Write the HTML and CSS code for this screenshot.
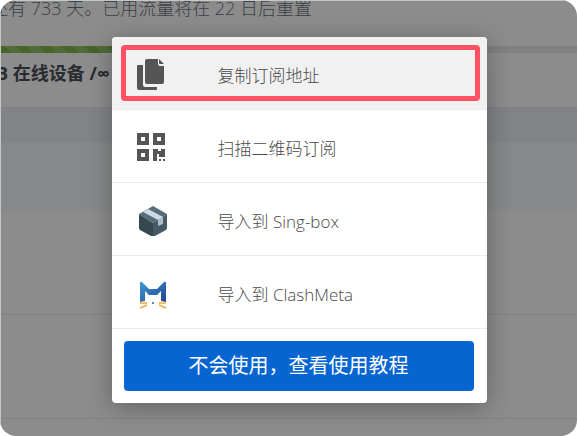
FILE: index.html
```
<!DOCTYPE html>
<html lang="zh-CN">
<head>
    <meta charset="UTF-8">
    <meta name="viewport" content="width=device-width, initial-scale=1.0">
    <title>订阅</title>
    <link rel="stylesheet" href="styles.css">
</head>
<body>
    <div class="app">
        <main class="page">
            <section class="plan">
                <p class="plan-expire">还有 733 天。已用流量将在 22 日后重置</p>
                <div class="progress">
                    <div class="progress-bar"></div>
                </div>
                <p class="plan-usage">B 在线设备 /∞</p>
            </section>
            <div class="band band-head"></div>
            <div class="band band-body"></div>
            <div class="band band-row"></div>
            <div class="band band-row"></div>
        </main>

        <div class="overlay">
            <div class="modal" role="dialog" aria-label="订阅">
                <button type="button" class="item active">
                    <svg class="icon" viewBox="0 0 32 32">
                        <g fill="#555">
                            <path d="M2 7h5v20q0 2 2 2h12v2q0 1-1 1H3q-2 0-2-2V8q0-1 1-1z"/>
                            <path d="M11 1h11v5q0 2 2 2h4v16q0 2-2 2H11q-2 0-2-2V3q0-2 2-2z"/>
                            <path d="M23 1l5 5h-4q-1 0-1-1z"/>
                        </g>
                    </svg>
                    <span>复制订阅地址</span>
                </button>
                <button type="button" class="item">
                    <svg class="icon" viewBox="0 0 32 32">
                        <path fill="none" stroke="#555" stroke-width="4" d="M3 4h8v8H3zM19 4h8v8h-8zM3 20h8v8H3z"/>
                        <path fill="#555" d="M17 18h5v2h3v-2h4v8h-6v-3h-2v7h-4zM23 28h2v2h-2zM27 28h2v2h-2z"/>
                    </svg>
                    <span>扫描二维码订阅</span>
                </button>
                <button type="button" class="item">
                    <svg class="icon" viewBox="0 0 32 32">
                        <path fill="#546e7a" d="M17 2l14 8-14 9-14-9z"/>
                        <path fill="#37474f" d="M3 10l14 9v14L4 26q-1-1-1-2z"/>
                        <path fill="#455a64" d="M31 10l-14 9v14l13-7q1-1 1-2z"/>
                        <path fill="#cfd8e3" d="M12 5l15 8-5 3L7 8z"/>
                        <path fill="#b0bccb" d="M22 16l5-3v7l-5 2z"/>
                    </svg>
                    <span>导入到 Sing-box</span>
                </button>
                <button type="button" class="item">
                    <svg class="icon" viewBox="0 0 32 32">
                        <defs>
                            <linearGradient id="cat" x1="0" y1="0" x2="1" y2="1">
                                <stop offset="0" stop-color="#3f9bd8"/>
                                <stop offset="1" stop-color="#1f438f"/>
                            </linearGradient>
                        </defs>
                        <path fill="url(#cat)" d="M4 6q0-2 2-1l7 7h8l7-7q2-1 2 1v19l-5-1V14l-4 4h-8l-4-4v10l-5 1z"/>
                        <circle cx="17" cy="26" r="1" fill="#2a5caa"/>
                        <path fill="none" stroke="#f2a93b" stroke-width="1.4" d="M4 26h7M11 28l-7 3M23 26h7M23 28l7 3"/>
                    </svg>
                    <span>导入到 ClashMeta</span>
                </button>
                <div class="modal-footer">
                    <a href="#" class="tutorial">不会使用，查看使用教程</a>
                </div>
                <div class="highlight"></div>
            </div>
        </div>
    </div>
</body>
</html>
```
FILE: styles.css
```
* {
    box-sizing: border-box;
}

body {
    margin: 0;
    background-color: #fff;
    font-family: "Open Sans", "Noto Sans CJK SC", sans-serif;
}

.app {
    position: relative;
    min-height: 100vh;
    border-radius: 16px;
    overflow: hidden;
}

.plan {
    height: 108px;
    border-bottom: 1px solid #e4e7ed;
}

.plan p {
    margin: 0;
    font-size: 18px;
    line-height: 24px;
    white-space: nowrap;
}

.plan .plan-expire {
    height: 46px;
    margin-left: -10px;
    line-height: 16px;
    color: #6c757d;
    font-weight: 300;
}

.progress {
    height: 7px;
    background-color: #ebebeb;
}

.progress-bar {
    width: 30%;
    height: 100%;
    background: repeating-linear-gradient(45deg, #82b847 0 8px, #96c36c 8px 16px);
}

.plan .plan-usage {
    margin-top: 8px;
    margin-left: -4px;
    color: #495057;
    font-weight: 700;
}

.band-head {
    height: 35px;
    background-color: #eceef6;
}

.band-body {
    height: 68px;
    background-color: #f5f7fa;
}

.band-row {
    height: 104px;
    border-bottom: 1px solid #ebebeb;
}

.overlay {
    position: absolute;
    inset: 0;
    display: flex;
    align-items: center;
    justify-content: center;
    padding: 3px 0 0 20px;
    background-color: rgba(0, 0, 0, 0.45);
    border: solid #c4c8c8;
    border-width: 1px 0 0 1px;
}

.modal {
    position: relative;
    width: 375px;
    background-color: #fff;
    border-radius: 4px;
    box-shadow: 0 4px 24px rgba(0, 0, 0, 0.3);
    overflow: hidden;
}

.item {
    display: flex;
    align-items: center;
    gap: 50px;
    width: 100%;
    height: 73px;
    padding: 2px 24px 0;
    border: none;
    border-bottom: 1px solid #ebebeb;
    background-color: #fff;
    color: #4a4a4a;
    font-family: inherit;
    font-size: 17px;
    font-weight: 300;
    text-align: left;
    cursor: pointer;
}

.item.active {
    background-color: #f1f1f1;
}

.icon {
    width: 32px;
    height: 32px;
}

.modal-footer {
    padding: 12px 13px 12px 12px;
}

.tutorial {
    display: block;
    border-radius: 4px;
    background-color: #0665d0;
    color: #fff;
    font-size: 20px;
    line-height: 50px;
    text-align: center;
    text-decoration: none;
}

.highlight {
    position: absolute;
    top: 8px;
    left: 9px;
    right: 7px;
    height: 56px;
    border: 5px solid #ff5163;
    border-radius: 4px;
    pointer-events: none;
}
```
